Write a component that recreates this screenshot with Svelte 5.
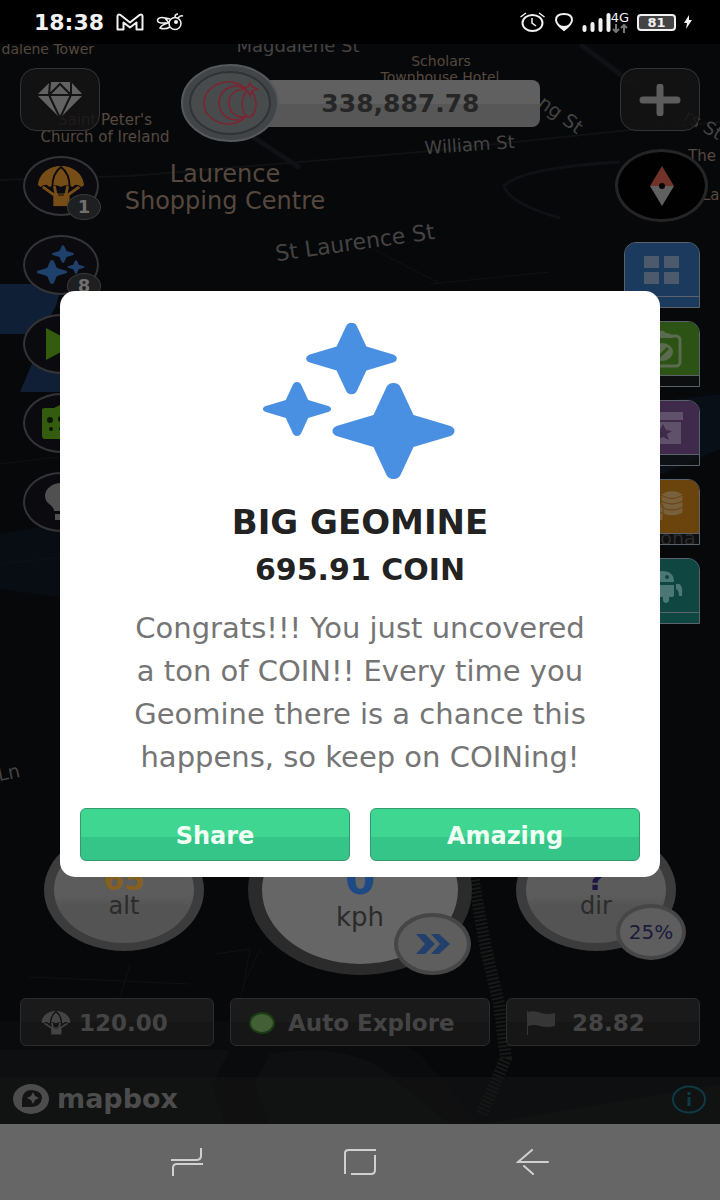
<script lang="ts">
  interface MapLabel {
    text: string;
    x: number;
    y: number;
    size: number;
    rotate?: number;
    anchor?: 'start' | 'middle' | 'end';
    kind?: 'place' | 'street';
  }

  const labels: MapLabel[] = [
    { text: 'dalene Tower', x: 94, y: 10, size: 14, anchor: 'end' },
    { text: 'Magdalene St', x: 298, y: 8, size: 18, kind: 'street' },
    { text: 'Scholars', x: 441, y: 22, size: 14 },
    { text: 'Townhouse Hotel', x: 440, y: 38, size: 14 },
    { text: "Saint Peter's", x: 105, y: 81, size: 15 },
    { text: 'Church of Ireland', x: 105, y: 98, size: 15 },
    { text: 'ng St', x: 557, y: 76, size: 19, rotate: 36, kind: 'street' },
    { text: 'rs St', x: 700, y: 86, size: 18, rotate: 30, kind: 'street' },
    { text: 'William St', x: 470, y: 107, size: 18, rotate: -4, kind: 'street' },
    { text: 'Laurence', x: 225, y: 138, size: 24 },
    { text: 'Shopping Centre', x: 225, y: 165, size: 24 },
    { text: 'St Laurence St', x: 356, y: 206, size: 22, rotate: -8, kind: 'street' },
    { text: 'The', x: 688, y: 117, size: 15, anchor: 'start' },
    { text: 'La', x: 702, y: 156, size: 15, anchor: 'start' },
    { text: 'Ln', x: 10, y: 735, size: 19, rotate: -12, kind: 'street' },
    { text: 'ona', x: 678, y: 501, size: 19, kind: 'street' }
  ];

  const tools = [
    { id: 'parcel', name: 'Parcels', count: 1 },
    { id: 'stars', name: 'Geomine', count: 8 },
    { id: 'play', name: 'Play', count: 0 },
    { id: 'dice', name: 'Dice', count: 0 },
    { id: 'bulb', name: 'Tips', count: 0 }
  ];

  const tiles = ['grid', 'tasks', 'shop', 'coins', 'robot'];

  // one four-pointed star, centred on 0,0
  const STAR =
    'M-7-44Q-5-48 0-48Q5-48 7-44L20-16L57-5Q61-3 61 0Q61 3 57 5L20 16L7 44Q5 48 0 48Q-5 48-7 44L-20 16L-57 5Q-61 3-61 0Q-61-3-57-5L-20-16Z';

  let dialogOpen = $state(true);

  function closeDialog() {
    dialogOpen = false;
  }
</script>

{#snippet parachute()}
  <path d="M1 21C2 8 13 0 25 0s23 8 24 21l-3 2q-5-5-9 0-6-4-12 0-6-4-12 0-4-5-9 0z" fill="currentColor" />
  <path d="M6 23L18 32M44 23L32 32M18 22L20 32M32 22L30 32" fill="none" stroke="currentColor" stroke-width="3" />
  <path d="M16 23Q16 8 25 1Q34 8 34 23" fill="none" stroke="#0b0b10" stroke-width="2" />
  <rect x="17" y="30" width="17" height="14" fill="currentColor" />
  <path d="M22 30h6v3h-6z" fill="#0b0b10" opacity=".5" />
{/snippet}

<div class="phone">
  <header class="status">
    <span class="clock">18:38</span>
    <svg width="28" height="18" viewBox="0 0 28 18" aria-hidden="true">
      <path d="M1.500 16.500V3Q2 .8 4.500 2L14 9.500L23.500 2Q26 .8 26.500 3V16.500H20.500V9.500L14 14.500L7.500 9.500V16.500Z" fill="none" stroke="#f2f2f2" stroke-width="2" stroke-linejoin="round" />
    </svg>
    <svg width="28" height="18" viewBox="0 0 28 18" aria-hidden="true">
      <g fill="none" stroke="#f2f2f2" stroke-width="1.500">
        <ellipse cx="19" cy="10.500" rx="6" ry="6" />
        <path d="M14 6Q4 3 2 6Q0 9 5 10H13M12 10Q5 12 4 15Q9 17 14 14M9 5l4 5M19 4q0-3 3-3M22 5q2-3 5-2" />
      </g>
      <circle cx="20" cy="9" r="2" fill="#f2f2f2" />
    </svg>
    <div class="indicators">
      <svg width="27" height="20" viewBox="0 0 27 20" aria-hidden="true">
        <g fill="none" stroke="#f2f2f2" stroke-width="2">
          <ellipse cx="13.500" cy="11" rx="10" ry="8" />
          <path d="M1.500 5L7 1M25.500 5L20 1M13 6v5l4 3" stroke-width="1.500" />
        </g>
      </svg>
      <svg width="20" height="20" viewBox="0 0 20 20" aria-hidden="true">
        <path d="M10 18Q2 12 2 8C2 4 5.500 2 10 2s8 2 8 6q0 4-8 10z" fill="none" stroke="#f2f2f2" stroke-width="2" />
        <path d="M4 12Q10 16 16 12L10 19z" fill="#f2f2f2" />
      </svg>
      <div class="signal">
        <svg width="29" height="20" viewBox="0 0 29 20" aria-hidden="true">
          <path d="M2.500 15v3M10.500 12v6M18.500 8v10M26.500 3v15" stroke="#f2f2f2" stroke-width="4" stroke-linecap="round" />
        </svg>
        <div class="network">
          <span>4G</span>
          <svg width="16" height="9" viewBox="0 0 16 9" aria-hidden="true">
            <path d="M4 0v8M1 5l3 3 3-3M12 9V1M9 4l3-3 3 3" fill="none" stroke="#777" stroke-width="2" />
          </svg>
        </div>
      </div>
      <div class="battery">81</div>
      <svg width="8" height="14" viewBox="0 0 8 14" aria-hidden="true">
        <path d="M5 0L0 8h3L2 14 8 5H5z" fill="#f2f2f2" />
      </svg>
    </div>
  </header>

  <main>
    <svg class="map" viewBox="0 0 720 1080" preserveAspectRatio="xMidYMin slice" aria-hidden="true">
      <rect width="720" height="1080" fill="#07080a" />
      <path d="M0 240H62L56 262 40 290H0z" fill="#0f1f35" />
      <path d="M20 348L34 315 90 262V348z" fill="#101f36" />
      <path d="M0 490L110 470V560L0 545z" fill="#080d13" />
      <path d="M640 360L720 350V405L640 440z" fill="#090f16" />
      <g fill="none" stroke="#101114">
        <path d="M0 136L130 132 300 118 420 108 640 85 720 78" stroke-width="2" />
        <path d="M230 78L300 124M580 0L640 45" stroke-width="5" />
        <path d="M620 118Q520 124 504 142Q510 160 560 174" stroke-width="3" />
        <path d="M375 206L445 242M430 240L550 228" stroke-width="1" />
        <path d="M0 420L100 408M0 520L180 500" stroke-width="1" />
        <path d="M30 933L190 940M130 920L118 960M215 910L250 905 240 960M260 905L246 935" stroke-width="1" />
      </g>
      <path d="M0 978L220 978Q340 960 420 1010L480 1080H0z" fill="#0a0b0d" />
      <path d="M0 1006H230L212 1040 225 1080H270L254 1040 270 1010Q360 996 400 1040L450 1080H480L720 1040V1080H0z" fill="#0e0f11" />
      <path d="M472 828L486 905 499 960 506 1014 482 1070" fill="none" stroke="#191918" stroke-width="12" stroke-dasharray="2 2" />
      {#each labels as label}
        <text
          class={label.kind ?? 'place'}
          x={label.x}
          y={label.y}
          font-size={label.size}
          text-anchor={label.anchor ?? 'middle'}
          transform={label.rotate ? `rotate(${label.rotate} ${label.x} ${label.y})` : undefined}
        >{label.text}</text>
      {/each}
    </svg>

    <div class="hud">
      <div class="topbar">
        <button class="square" aria-label="Gems">
          <svg width="46" height="36" viewBox="0 0 46 36">
            <path d="M13 0H34L46 13 23 36 0 13z" fill="#626262" />
            <path d="M0 13H46M13 0L12 13 23 36 34 13 34 0M12 13L23 2 34 13" fill="none" stroke="#141414" stroke-width="2" />
          </svg>
        </button>
        <div class="balance">
          <svg class="coin" width="98" height="78" viewBox="0 0 98 78" aria-hidden="true">
            <ellipse cx="49" cy="39" rx="48" ry="38" fill="#424547" stroke="#56595a" stroke-width="2" />
            <ellipse cx="49" cy="39" rx="40" ry="31" fill="#484b4c" stroke="#303335" stroke-width="2" />
            <g fill="none" stroke="#7d2430" stroke-width="1.500">
              <path d="M65 25Q58 18 48 18C34 18 23 27 23 39S34 60 48 60Q57 60 63 54" />
              <path d="M63 24C50 18 38 27 38 39S50 60 64 54" />
              <path d="M66 26C56 23 48 30 48 39S56 56 66 52" />
              <ellipse cx="68" cy="40" rx="7" ry="13" />
              <path d="M69 19l2 4 5 2-5 2-2 5-2-5-5-2 5-2z" fill="#484b4c" />
            </g>
          </svg>
          <span class="amount">338,887.78</span>
        </div>
        <button class="square" aria-label="Add">
          <svg width="42" height="32" viewBox="0 0 42 32">
            <path d="M21 3V29M4 16H38" stroke="#5c5c5c" stroke-width="7" stroke-linecap="round" />
          </svg>
        </button>
      </div>

      <div class="rails">
        <div class="rail">
          {#each tools as tool}
            <button class="round" aria-label={tool.name}>
              {#if tool.id === 'parcel'}
                <svg class="orange" width="48" height="41" viewBox="0 0 50 45" preserveAspectRatio="none">{@render parachute()}</svg>
              {:else if tool.id === 'stars'}
                <svg width="48" height="40" viewBox="0 0 48 40" fill="#1e406a">
                  <path d={STAR} transform="translate(26 9) scale(.18)" />
                  <path d={STAR} transform="translate(15 27) scale(.25)" />
                  <path d={STAR} transform="translate(39 22) scale(.14)" />
                </svg>
              {:else if tool.id === 'play'}
                <svg width="30" height="34" viewBox="0 0 30 34"><path d="M0 1L30 17 0 33z" fill="#335c0e" /></svg>
              {:else if tool.id === 'dice'}
                <svg width="38" height="36" viewBox="0 0 38 36">
                  <path d="M0 5Q0 3 3 3H12L18 0 22 3H38V34H3Q0 34 0 31z" fill="#335c0e" />
                  <g fill="#0d160a"><circle cx="8" cy="15" r="3" /><circle cx="19" cy="14" r="3" /><circle cx="9" cy="24" r="2" /><circle cx="19" cy="24" r="2" /></g>
                </svg>
              {:else}
                <svg width="34" height="38" viewBox="0 0 34 38" fill="#505050">
                  <path d="M17 0C26 0 33 6 33 13 33 21 24 22 24 28H10C10 22 1 21 1 13 1 6 8 0 17 0zM11 31H23V37H11z" />
                </svg>
              {/if}
              {#if tool.count}
                <span class="count">{tool.count}</span>
              {/if}
            </button>
          {/each}
        </div>

        <div class="rail right">
          <button class="compass" aria-label="Compass">
            <svg width="24" height="40" viewBox="0 0 24 40">
              <path d="M12 0L24 20H0z" fill="#713329" />
              <path d="M0 20H24L12 40z" fill="#606060" />
              <circle cx="12" cy="20" r="3" fill="#050505" />
            </svg>
          </button>
          {#each tiles as tile}
            <button class="tile {tile}" aria-label={tile}>
              <span class="face">
                {#if tile === 'grid'}
                  <svg width="36" height="28" viewBox="0 0 36 28" fill="#4c5a6b">
                    <path d="M0 0H15V12H0zM20 0H35V12H20zM0 16H15V28H0zM20 16H35V28H20z" />
                  </svg>
                {:else if tile === 'tasks'}
                  <svg width="40" height="38" viewBox="0 0 40 38">
                    <rect x="2" y="6" width="36" height="30" rx="4" fill="none" stroke="#5b6b50" stroke-width="3" />
                    <path d="M9 8Q10 3 16 3Q20-2 24 3Q30 3 31 8z" fill="#5b6b50" />
                    <ellipse cx="20" cy="22" rx="11" ry="9" fill="#5b6b50" />
                    <path d="M14 22l4 4 8-8" fill="none" stroke="#2d5314" stroke-width="3" />
                  </svg>
                {:else if tile === 'shop'}
                  <svg width="42" height="32" viewBox="0 0 42 32">
                    <path d="M0 0H42V8H0zM2 10H40V32H2z" fill="#60516a" />
                    <path d="M22 12l3 6 6 1-5 3 2 6-6-3-6 3 2-6-5-3 6-1z" fill="#3f2a4c" />
                  </svg>
                {:else if tile === 'coins'}
                  <svg width="44" height="34" viewBox="0 0 44 34" fill="#77603c" stroke="#6a430d" stroke-width="1">
                    <path d="M21 4V23Q32 29 43 23V4Q32-3 21 4z" />
                    <path d="M21 5Q32 12 43 5M21 11Q32 17 43 11M21 17Q32 23 43 17" fill="none" />
                    <path d="M3 15V30Q13 35 23 30V15Q13 10 3 15z" />
                    <path d="M3 16Q13 22 23 16M3 22Q13 28 23 22" fill="none" />
                  </svg>
                {:else}
                  <svg width="42" height="36" viewBox="0 0 42 36" fill="#4b7775">
                    <path d="M9 13Q9 4 16 3L14 0M9 14Q9 3 21 3Q33 3 33 14zM9 17H33V27Q33 29 30 29H28V33Q25 37 22 33V29H12Q9 29 9 27zM2 17h5v10H2zM35 16h3q4 1 3 12h-3q0-6-3-7z" />
                    <circle cx="26" cy="9" r="2" fill="#104642" />
                  </svg>
                {/if}
              </span>
            </button>
          {/each}
        </div>
      </div>

      <div class="bottom">
        <div class="gauges">
          <div class="gauge">
            <strong class="alt">65</strong>
            <span>alt</span>
          </div>
          <div class="gauge speed">
            <strong>0</strong>
            <span>kph</span>
            <button class="boost" aria-label="Boost">
              <svg width="34" height="20" viewBox="0 0 34 20" fill="#21406b">
                <path d="M0 0H9L19 10 9 20H0L9 10zM15 0H23L34 10 23 20H15L24 10z" />
              </svg>
            </button>
          </div>
          <div class="gauge">
            <strong class="dir">?</strong>
            <span>dir</span>
            <span class="percent">25%</span>
          </div>
        </div>

        <div class="stats">
          <button class="stat">
            <svg width="30" height="24" viewBox="0 0 50 45" preserveAspectRatio="none">{@render parachute()}</svg>
            120.00
          </button>
          <button class="stat wide">
            <i class="led"></i>
            Auto Explore
          </button>
          <button class="stat flag">
            <svg width="28" height="24" viewBox="0 0 28 24">
              <path d="M0 0V24" stroke="#363636" stroke-width="2" />
              <path d="M1 1Q7-1 14 2Q20 4 28 2V15Q20 17 13 15Q7 13 1 15z" fill="#363636" />
            </svg>
            28.82
          </button>
        </div>

        <footer class="attribution">
          <svg width="36" height="30" viewBox="0 0 36 30" aria-hidden="true">
            <ellipse cx="18" cy="15" rx="18" ry="15" fill="#4c4c4c" />
            <path d="M9 23V15Q10 6 19 6Q29 7 29 14Q28 23 17 23z" fill="#141414" />
            <path d="M20 8l2 4 4 2-4 2-2 4-2-4-4-2 4-2z" fill="#4c4c4c" />
          </svg>
          <span>mapbox</span>
          <a href="#info" aria-label="Map information">
            <svg width="36" height="29" viewBox="0 0 36 29">
              <ellipse cx="18" cy="14.500" rx="16" ry="13" fill="none" stroke="#0d3b44" stroke-width="2" />
              <path d="M18 12v9M18 7v3" fill="none" stroke="#0d3b44" stroke-width="3" />
            </svg>
          </a>
        </footer>
      </div>
    </div>

    {#if dialogOpen}
      <div class="overlay">
        <div class="dialog" role="dialog" aria-modal="true" aria-labelledby="dialog-title">
          <svg class="hero" width="194" height="157" viewBox="0 0 194 157" fill="#4a90e2" aria-hidden="true">
            <path d={STAR} transform="translate(88.500 35.500) scale(.745)" />
            <path d={STAR} transform="translate(34 86) scale(.56)" />
            <path d={STAR} transform="translate(130.500 108)" />
          </svg>
          <h1 id="dialog-title">BIG GEOMINE</h1>
          <h2>695.91 COIN</h2>
          <p>
            Congrats!!! You just uncovered a ton of COIN!! Every time you Geomine there is a chance this
            happens, so keep on COINing!
          </p>
          <div class="actions">
            <button onclick={closeDialog}>Share</button>
            <button onclick={closeDialog}>Amazing</button>
          </div>
        </div>
      </div>
    {/if}
  </main>

  <nav>
    <button aria-label="Recent apps">
      <svg width="34" height="28" viewBox="0 0 34 28">
        <path d="M1 12H26Q31 12 31 8V0M33 16H7Q3 16 3 20V28" fill="none" stroke="#d0d0d0" stroke-width="2" />
      </svg>
    </button>
    <button aria-label="Home">
      <svg width="34" height="28" viewBox="0 0 34 28">
        <path d="M2 26V5Q2 2 6 2H33M8 26H28Q32 26 32 22V7" fill="none" stroke="#d0d0d0" stroke-width="2" />
      </svg>
    </button>
    <button aria-label="Back">
      <svg width="34" height="28" viewBox="0 0 34 28">
        <path d="M32 14H2L16 2M8 18L17 26" fill="none" stroke="#d0d0d0" stroke-width="2" stroke-linecap="round" />
      </svg>
    </button>
  </nav>
</div>

<style>
  :global(body) {
    margin: 0;
    background: #000;
  }

  .phone {
    display: flex;
    flex-direction: column;
    min-height: 100vh;
    font-family: 'DejaVu Sans', sans-serif;
  }

  button {
    padding: 0;
    border: none;
    background: none;
    font-family: inherit;
    cursor: pointer;
  }

  svg {
    display: block;
    flex: none;
  }

  .status {
    display: flex;
    align-items: center;
    gap: 12px;
    height: 44px;
    padding: 0 28px 0 34px;
    background: #000;
    color: #f2f2f2;
  }

  .clock {
    font-size: 22px;
    font-weight: 700;
  }

  .indicators {
    display: flex;
    align-items: center;
    gap: 8px;
    margin-left: auto;
  }

  .signal {
    display: flex;
    align-items: center;
  }

  .network {
    display: flex;
    flex-direction: column;
    align-items: center;
    font-size: 13px;
    line-height: 13px;
  }

  .battery {
    width: 35px;
    border: 2px solid #f2f2f2;
    border-radius: 4px;
    background: #444;
    font-size: 13px;
    font-weight: 700;
    line-height: 13px;
    text-align: center;
  }

  main {
    position: relative;
    display: flex;
    flex: 1;
    background: #07080a;
    overflow: hidden;
  }

  .map {
    position: absolute;
    inset: 0;
    width: 100%;
    height: 100%;
  }

  .map .place {
    fill: #56483f;
  }

  .map .street {
    fill: #444443;
  }

  .hud {
    position: relative;
    display: flex;
    flex: 1;
    flex-direction: column;
  }

  .topbar {
    display: flex;
    justify-content: space-between;
    padding: 20px 20px 0;
  }

  .square {
    display: flex;
    align-items: center;
    justify-content: center;
    width: 80px;
    height: 63px;
    margin-top: 4px;
    border: 1px solid #343434;
    border-radius: 16px;
    background: rgba(20, 20, 20, 0.85);
  }

  .balance {
    display: flex;
    align-items: center;
  }

  .coin {
    position: relative;
    z-index: 1;
  }

  .amount {
    width: 229px;
    margin-left: -28px;
    padding-right: 60px;
    border-radius: 8px;
    background: linear-gradient(#606060 50%, #575757 50%);
    color: #262626;
    font-size: 25px;
    font-weight: 700;
    line-height: 47px;
    text-align: right;
  }

  .rails {
    display: flex;
    justify-content: space-between;
    padding: 7px 12px 0 23px;
  }

  .rail {
    display: flex;
    flex-direction: column;
    gap: 19px;
    padding-top: 7px;
  }

  .rail.right {
    align-items: center;
    gap: 13px;
    padding-top: 0;
  }

  .round {
    position: relative;
    display: flex;
    align-items: center;
    justify-content: center;
    width: 76px;
    height: 60px;
    border: 2px solid #343437;
    border-radius: 50%;
    background: #0a0a0f;
  }

  .orange {
    color: #764d17;
  }

  .count {
    position: absolute;
    right: -4px;
    bottom: -6px;
    width: 32px;
    border: 1px solid #3a3a3a;
    border-radius: 50%;
    background: #1e1f21;
    color: #707070;
    font-size: 18px;
    font-weight: 700;
    line-height: 24px;
  }

  .compass {
    display: flex;
    align-items: center;
    justify-content: center;
    width: 93px;
    height: 73px;
    margin-bottom: 7px;
    border: 3px solid #252526;
    border-radius: 50%;
    background: #010101;
  }

  .tile {
    display: flex;
    flex-direction: column;
    align-items: stretch;
    width: 76px;
    height: 66px;
    border: 1px solid #5a626b;
    border-radius: 12px 12px 0 0;
    background: rgba(20, 20, 20, 0.5);
  }

  .face {
    display: flex;
    align-items: center;
    justify-content: center;
    height: 53px;
    border-bottom: 1px solid #5a626b;
    border-radius: 11px 11px 0 0;
  }

  .grid,
  .grid .face {
    background: #1c3a5e;
  }

  .tasks .face {
    background: #2d5314;
  }

  .shop .face {
    background: #3f2a4c;
  }

  .coins .face {
    background: #6a430d;
  }

  .robot,
  .robot .face {
    background: #104642;
  }

  .bottom {
    margin-top: auto;
  }

  .gauges {
    display: flex;
    align-items: center;
    justify-content: space-between;
    padding: 0 44px;
  }

  .gauge {
    position: relative;
    display: flex;
    flex-direction: column;
    align-items: center;
    justify-content: center;
    box-sizing: border-box;
    width: 160px;
    height: 122px;
    padding-top: 8px;
    border: solid #3c3c3c;
    border-width: 8px 10px;
    border-radius: 50%;
    background: linear-gradient(#5c5c5c 55%, #545454 65%);
    color: #2b2b2b;
    font-size: 24px;
    line-height: 28px;
  }

  .gauge strong {
    font-size: 30px;
    line-height: 24px;
  }

  .gauge .alt {
    color: #86601f;
  }

  .gauge .dir {
    color: #1a1740;
  }

  .speed {
    width: 224px;
    height: 170px;
    padding-top: 10px;
    border-color: #2b2b2b;
    border-width: 11px 14px;
    background: #666;
    font-size: 26px;
    line-height: 32px;
  }

  .speed strong {
    color: #1d4a85;
    font-size: 44px;
    line-height: 44px;
  }

  .boost,
  .percent {
    position: absolute;
    display: flex;
    align-items: center;
    justify-content: center;
    box-sizing: border-box;
    border: 4px solid #464646;
    border-radius: 50%;
    background: #5e5e5e;
  }

  .boost {
    right: -13px;
    bottom: -11px;
    width: 77px;
    height: 62px;
  }

  .percent {
    right: -20px;
    bottom: -17px;
    width: 70px;
    height: 56px;
    color: #1c1a3c;
    font-size: 20px;
  }

  .stats {
    display: grid;
    grid-template-columns: 194fr 260fr 194fr;
    gap: 16px;
    padding: 23px 20px 31px;
  }

  .stat {
    display: flex;
    align-items: center;
    gap: 8px;
    height: 48px;
    padding: 2px 0 0 20px;
    border: 1px solid #2c2c2c;
    border-radius: 6px;
    background: linear-gradient(#1a1a1a 50%, #161616 50%);
    color: #444;
    font-size: 23px;
    font-weight: 700;
    white-space: nowrap;
  }

  .stat.wide {
    gap: 13px;
    padding-left: 18px;
  }

  .stat.flag {
    gap: 17px;
  }

  .led {
    width: 22px;
    height: 18px;
    border: 2px solid #1a3d15;
    border-radius: 50%;
    background: #425f35;
  }

  .attribution {
    display: flex;
    align-items: center;
    gap: 8px;
    height: 44px;
    padding: 0 13px 3px;
    background: rgba(20, 20, 20, 0.6);
    color: #4c4c4c;
    font-size: 27px;
    font-weight: 700;
    line-height: 32px;
  }

  .attribution a {
    margin-left: auto;
  }

  .overlay {
    position: absolute;
    inset: 0;
    display: flex;
    align-items: center;
    justify-content: center;
    padding: 0 60px;
  }

  .dialog {
    flex: 1;
    max-width: 600px;
    box-sizing: border-box;
    padding: 32px 20px 16px;
    border-radius: 15px;
    background: #fff;
    text-align: center;
  }

  .hero {
    margin: 0 auto 18px;
  }

  h1,
  h2 {
    margin: 0;
    color: #222;
    font-size: 34px;
    line-height: 48px;
  }

  h2 {
    font-size: 30px;
  }

  p {
    margin: 13px 44px 29px;
    color: #757575;
    font-size: 29px;
    line-height: 43px;
  }

  .actions {
    display: grid;
    grid-template-columns: 1fr 1fr;
    gap: 20px;
  }

  .actions button {
    height: 53px;
    padding-top: 2px;
    border: 1px solid #349a6d;
    border-radius: 6px;
    background: linear-gradient(#3fd692 54%, #35c589 54%);
    color: #f0fff4;
    font-size: 24px;
    font-weight: 700;
  }

  nav {
    display: flex;
    align-items: center;
    justify-content: space-between;
    height: 76px;
    padding: 0 170px;
    background: #666;
  }
</style>
